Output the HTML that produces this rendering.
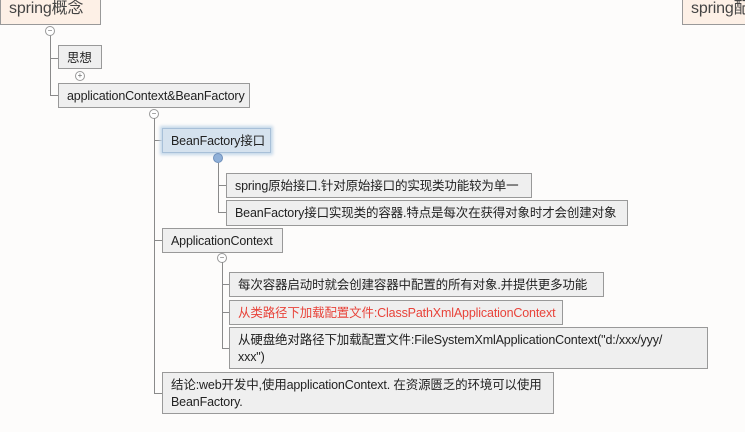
<html><head><style>
body{margin:0;width:745px;height:432px;background:#fdfcfb;position:relative;overflow:hidden;font-family:"Liberation Sans","Noto Sans CJK SC",sans-serif;font-size:12.5px;letter-spacing:-0.15px;color:#222}
.b{position:absolute;background:#efefef;border:1px solid #999;box-sizing:border-box;padding:4px 8px;line-height:17px;white-space:nowrap;overflow:hidden}
.l{position:absolute;background:#8a8a8a}
.c{position:absolute;width:8px;height:8px;border:1px solid #999;border-radius:50%;background:#fff;font-size:8px;line-height:8px;text-align:center;color:#666;letter-spacing:0}
</style></head><body>
<div class="b" style="left:0;top:-6px;width:101px;height:31px;background:#fdf0e6;font-size:16px;padding-top:5px;color:#444">spring概念</div>
<div class="b" style="left:682px;top:-6px;width:70px;height:31px;background:#fdf0e6;font-size:16px;padding-top:5px;color:#444">spring配</div>
<div class="l" style="left:50px;top:35px;width:1px;height:60px"></div>
<div class="c" style="left:45px;top:26px">−</div>
<div class="l" style="left:50px;top:58px;width:8px;height:1px"></div>
<div class="l" style="left:50px;top:95px;width:8px;height:1px"></div>
<div class="b" style="left:58px;top:45px;width:44px;height:24px">思想</div>
<div class="c" style="left:75px;top:71px">+</div>
<div class="b" style="left:58px;top:83px;width:192px;height:25px">applicationContext&amp;BeanFactory</div>
<div class="c" style="left:149px;top:109px">−</div>
<div class="l" style="left:154px;top:118px;width:1px;height:276px"></div>
<div class="l" style="left:154px;top:140px;width:8px;height:1px"></div>
<div class="l" style="left:154px;top:240px;width:8px;height:1px"></div>
<div class="l" style="left:154px;top:393px;width:8px;height:1px"></div>
<div class="b" style="left:162px;top:128px;width:109px;height:25px;background:#d5e2ee;border-color:#a8c0d8;box-shadow:0 0 3px 2px #c5d8ea">BeanFactory接口</div>
<div style="position:absolute;left:213px;top:153px;width:10px;height:10px;border-radius:50%;background:#8fb0d8;border:1px solid #6f90bb;box-sizing:border-box"></div>
<div class="l" style="left:218px;top:163px;width:1px;height:49px"></div>
<div class="l" style="left:218px;top:185px;width:8px;height:1px"></div>
<div class="l" style="left:218px;top:212px;width:8px;height:1px"></div>
<div class="b" style="left:226px;top:173px;width:306px;height:25px">spring原始接口.针对原始接口的实现类功能较为单一</div>
<div class="b" style="left:226px;top:200px;width:402px;height:26px">BeanFactory接口实现类的容器.特点是每次在获得对象时才会创建对象</div>
<div class="b" style="left:162px;top:228px;width:121px;height:25px">ApplicationContext</div>
<div class="c" style="left:217px;top:253px">−</div>
<div class="l" style="left:222px;top:262px;width:1px;height:87px"></div>
<div class="l" style="left:222px;top:284px;width:7px;height:1px"></div>
<div class="l" style="left:222px;top:312px;width:7px;height:1px"></div>
<div class="l" style="left:222px;top:348px;width:7px;height:1px"></div>
<div class="b" style="left:229px;top:272px;width:375px;height:25px">每次容器启动时就会创建容器中配置的所有对象.并提供更多功能</div>
<div class="b" style="left:229px;top:300px;width:334px;height:25px;color:#e8433a">从类路径下加载配置文件:ClassPathXmlApplicationContext</div>
<div class="b" style="left:229px;top:327px;width:479px;height:42px">从硬盘绝对路径下加载配置文件:FileSystemXmlApplicationContext("d:/xxx/yyy/<br>xxx")</div>
<div class="b" style="left:162px;top:372px;width:392px;height:42px">结论:web开发中,使用applicationContext. 在资源匮乏的环境可以使用<br>BeanFactory.</div>
</body></html>
